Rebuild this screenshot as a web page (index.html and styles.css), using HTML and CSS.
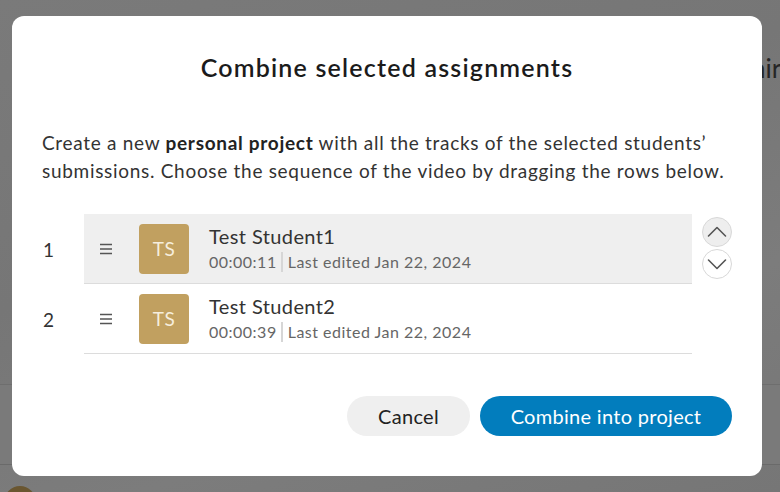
FILE: index.html
```html
<!DOCTYPE html>
<html lang="en">
<head>
<meta charset="utf-8">
<title>Combine selected assignments</title>
<link rel="stylesheet" href="styles.css">
</head>
<body>
<div class="backdrop">
  <div class="bg-text">nir</div>
  <div class="bg-band"></div>
  <div class="bg-avatar"></div>
</div>
<div class="overlay">
  <div class="modal" role="dialog">
    <h1 class="title">Combine selected assignments</h1>
    <p class="desc">Create a new <strong>personal project</strong> with all the tracks of the selected students’ submissions. Choose the sequence of the video by dragging the rows below.</p>
    <div class="list">
      <div class="item">
        <div class="num">1</div>
        <div class="row selected">
          <div class="handle"><svg viewBox="0 0 14 12" width="14" height="12"><path d="M1 1.5H13M1 6H13M1 10.5H13" stroke="#555" stroke-width="1.4" fill="none"/></svg></div>
          <div class="avatar">TS</div>
          <div class="info">
            <div class="name">Test Student1</div>
            <div class="meta"><span class="time">00:00:11</span><span class="sep"></span><span class="edited">Last edited Jan 22, 2024</span></div>
          </div>
        </div>
        <div class="arrows">
          <button class="arrow up" aria-label="Move up"><svg viewBox="0 0 30 30" width="30" height="30"><path d="M6.5 19 L15 10.5 L23.5 19" fill="none" stroke="#555" stroke-width="1.6" stroke-linecap="round" stroke-linejoin="round"/></svg></button>
          <button class="arrow down" aria-label="Move down"><svg viewBox="0 0 30 30" width="30" height="30"><path d="M6.5 11 L15 19.5 L23.5 11" fill="none" stroke="#555" stroke-width="1.6" stroke-linecap="round" stroke-linejoin="round"/></svg></button>
        </div>
      </div>
      <div class="item">
        <div class="num">2</div>
        <div class="row">
          <div class="handle"><svg viewBox="0 0 14 12" width="14" height="12"><path d="M1 1.5H13M1 6H13M1 10.5H13" stroke="#555" stroke-width="1.4" fill="none"/></svg></div>
          <div class="avatar">TS</div>
          <div class="info">
            <div class="name">Test Student2</div>
            <div class="meta"><span class="time">00:00:39</span><span class="sep"></span><span class="edited">Last edited Jan 22, 2024</span></div>
          </div>
        </div>
        <div class="arrows"></div>
      </div>
    </div>
    <div class="actions">
      <button class="btn cancel">Cancel</button>
      <button class="btn primary">Combine into project</button>
    </div>
  </div>
</div>
</body>
</html>
```

FILE: styles.css
```css
* { box-sizing: border-box; }
html, body {
  margin: 0;
  padding: 0;
  width: 780px;
  height: 492px;
  overflow: hidden;
  font-family: Lato, "Open Sans", sans-serif;
}
body {
  position: relative;
  background: #787878;
}
.backdrop {
  position: absolute;
  inset: 0;
  overflow: hidden;
  background: linear-gradient(160deg, #7a7a7a 0%, #767676 40%, #7c7c7c 70%, #767676 100%);
}
.bg-text {
  position: absolute;
  left: 751px;
  top: 52px;
  font-size: 26px;
  line-height: 32px;
  color: #262626;
  white-space: nowrap;
}
.bg-band {
  position: absolute;
  left: 0;
  right: 0;
  top: 384px;
  height: 81px;
  border-top: 1px solid #6e6e6e;
  border-bottom: 1px solid #6a6a6a;
  background: #7a7a7a;
}
.bg-avatar {
  position: absolute;
  left: 4px;
  top: 486px;
  width: 32px;
  height: 32px;
  border-radius: 50%;
  background: #6a5630;
}
.overlay {
  position: absolute;
  inset: 0;
  padding: 16px 18px 16px 12px;
}
.modal {
  width: 750px;
  height: 460px;
  background: #fff;
  border-radius: 12px;
  padding: 0 30px;
  display: flex;
  flex-direction: column;
}
.title {
  margin: 34px 0 0;
  text-align: center;
  font-size: 25px;
  font-weight: 600;
  color: #1b1b1b;
  line-height: 34px;
  letter-spacing: 1.2px;
}
.desc {
  margin: 45px 0 0;
  font-size: 19px;
  line-height: 28px;
  color: #333;
  letter-spacing: 0.7px;
}
.desc strong { font-weight: 700; color: #222; }
.list {
  margin-top: 29px;
  display: flex;
  flex-direction: column;
}
.item {
  display: flex;
  align-items: stretch;
  height: 70px;
}
.num {
  width: 42px;
  display: flex;
  align-items: center;
  padding-left: 1px;
  font-size: 19px;
  color: #333;
}
.row {
  width: 608px;
  display: flex;
  align-items: center;
  border-bottom: 1px solid #dcdcdc;
}
.row.selected { background: #efefef; }
.handle {
  width: 55px;
  padding-left: 15px;
  display: flex;
  align-items: center;
}
.avatar {
  width: 50px;
  height: 50px;
  border-radius: 4px;
  background: #c1a060;
  color: #f6eedd;
  font-size: 19px;
  display: flex;
  align-items: center;
  justify-content: center;
  letter-spacing: 0.5px;
}
.info {
  margin-left: 20px;
  display: flex;
  flex-direction: column;
  padding-bottom: 2px;
}
.name {
  font-size: 20px;
  color: #333;
  line-height: 24px;
  letter-spacing: 0.4px;
}
.meta {
  display: flex;
  align-items: center;
  font-size: 16px;
  color: #666;
  line-height: 20px;
  margin-top: 4px;
  letter-spacing: 0.5px;
}
.sep {
  width: 2px;
  height: 20px;
  background: #d6d6d6;
  margin: 0 5px 0 4px;
}
.arrows {
  display: flex;
  flex-direction: column;
  align-items: center;
  gap: 2px;
  margin-left: 10px;
  padding-top: 3px;
}
.arrow {
  width: 30px;
  height: 30px;
  border-radius: 50%;
  border: 1px solid #d8d8d8;
  background: #fff;
  padding: 0;
  display: flex;
  align-items: center;
  justify-content: center;
  overflow: hidden;
}
.arrow svg { flex: none; }
.arrow.up { background: #eeeeee; }
.actions {
  margin-top: 42px;
  display: flex;
  justify-content: flex-end;
  gap: 10px;
}
.btn {
  height: 40px;
  border-radius: 20px;
  border: none;
  font-family: Lato, "Open Sans", sans-serif;
  font-size: 20px;
  letter-spacing: 0.3px;
  padding: 0;
}
.cancel {
  background: #efefef;
  color: #222;
  width: 123px;
}
.primary {
  background: #027dbd;
  color: #fff;
  width: 252px;
}
```
